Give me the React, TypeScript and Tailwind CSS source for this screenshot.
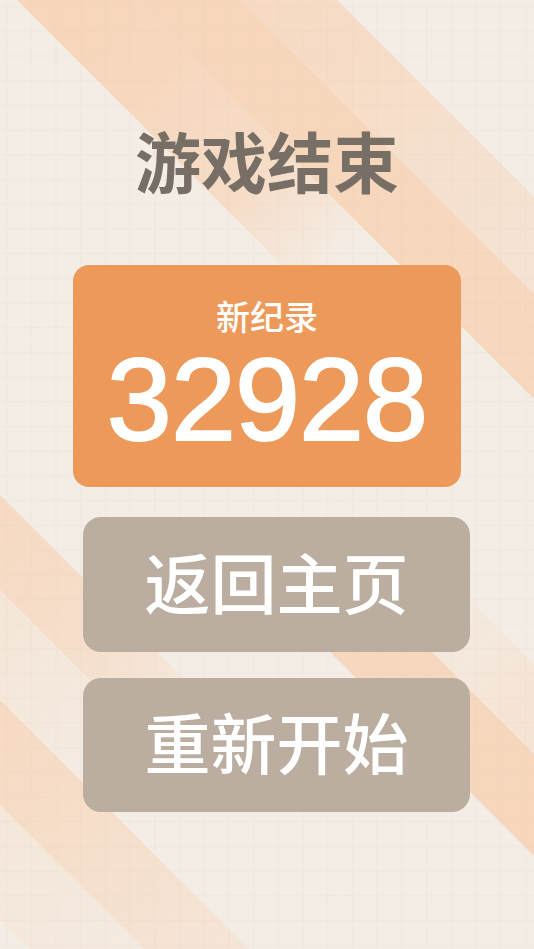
import React from 'react';

type Stripe = {
  id: string;
  c1: number;
  c2: number;
  x1: number;
  x2: number;
  stops: [number, number][]; // [x along the stripe, opacity]
};

const PEACH = '#f7d6bb';

// diagonal bands, each one bounded by the lines y = x + c1 and y = x + c2
const stripes: Stripe[] = [
  { id: 's1', c1: -337, c2: -240, x1: -400, x2: 700, stops: [[150, 1], [534, 0.45]] },
  { id: 's2', c1: -240, c2: -135, x1: -400, x2: 700, stops: [[150, 1], [534, 0.95]] },
  { id: 's3', c1: -135, c2: -17, x1: -400, x2: 700, stops: [[100, 1], [250, 0.75], [340, 0]] },
  { id: 's4', c1: 130, c2: 220, x1: 360, x2: 700, stops: [[400, 0], [534, 0.4]] },
  { id: 's5', c1: 220, c2: 322, x1: 290, x2: 700, stops: [[300, 0], [335, 0.9], [534, 1]] },
  { id: 's6', c1: 495, c2: 590, x1: -300, x2: 400, stops: [[-50, 0.9], [100, 0.6], [200, 0]] },
  { id: 's7', c1: 590, c2: 700, x1: -300, x2: 400, stops: [[0, 0.3], [150, 0]] },
  { id: 's8', c1: 700, c2: 805, x1: -300, x2: 500, stops: [[-50, 0.9], [150, 0.5], [330, 0]] },
  { id: 's9', c1: 805, c2: 920, x1: -300, x2: 500, stops: [[0, 0.25], [200, 0]] },
];

const Background: React.FC = () => (
  <svg className="absolute inset-0 h-full w-full" viewBox="0 0 534 949" preserveAspectRatio="none">
    <defs>
      {stripes.map(s => {
        const mid = (s.c1 + s.c2) / 2;
        const lo = Math.min(...s.stops.map(p => p[0]));
        const hi = Math.max(...s.stops.map(p => p[0]));
        return (
          <linearGradient
            key={s.id}
            id={s.id}
            gradientUnits="userSpaceOnUse"
            x1={lo}
            y1={lo + mid}
            x2={hi}
            y2={hi + mid}
          >
            {s.stops.map(([x, o], i) => (
              <stop key={i} offset={hi === lo ? 0 : (x - lo) / (hi - lo)} stopColor={PEACH} stopOpacity={o} />
            ))}
          </linearGradient>
        );
      })}
      <pattern id="cells" width="24.7" height="24.7" patternUnits="userSpaceOnUse" x="6" y="6">
        <path d="M0 0H24.7M0 0V24.7" stroke="#dcc6b1" strokeWidth="2.5" fill="none" />
      </pattern>
    </defs>
    {stripes.map(s => (
      <polygon
        key={s.id}
        points={`${s.x1},${s.x1 + s.c1} ${s.x2},${s.x2 + s.c1} ${s.x2},${s.x2 + s.c2} ${s.x1},${s.x1 + s.c2}`}
        fill={`url(#${s.id})`}
      />
    ))}
    <rect width="534" height="949" fill="url(#cells)" opacity="0.13" />
  </svg>
);

const cjk = "font-['Noto_Sans_CJK_SC','Noto_Sans',sans-serif]";

export default function App() {
  return (
    <div className="relative min-h-screen w-full overflow-hidden bg-[#f4ede6]">
      <Background />
      <div className="relative flex flex-col">
        <h1 className={`${cjk} mt-[126px] text-center text-[66px] leading-[66px] font-bold text-[#776e65]`}>
          游戏结束
        </h1>

        <div className="mt-[73px] ml-[73px] flex h-[222px] w-[388px] flex-col items-center rounded-2xl bg-[#ed995a]">
          <p className={`${cjk} mt-[34px] text-[34px] leading-[34px] font-medium text-white`}>新纪录</p>
          <p className="mt-[17px] font-['Liberation_Sans',Arial,sans-serif] text-[117px] leading-[100px] font-normal tracking-[-1px] text-white [-webkit-text-stroke:2px_#fff]">
            32928
          </p>
        </div>

        <button className="mt-[30px] ml-[83px] flex h-[135px] w-[387px] items-center justify-center rounded-[18px] bg-[#bbada0] pb-[10px]">
          <span className={`${cjk} text-[66px] leading-[66px] font-medium text-white`}>返回主页</span>
        </button>

        <button className="mt-[26px] ml-[83px] flex h-[134px] w-[387px] items-center justify-center rounded-[18px] bg-[#bbada0] pb-[10px]">
          <span className={`${cjk} text-[66px] leading-[66px] font-medium text-white`}>重新开始</span>
        </button>
      </div>
    </div>
  );
}
